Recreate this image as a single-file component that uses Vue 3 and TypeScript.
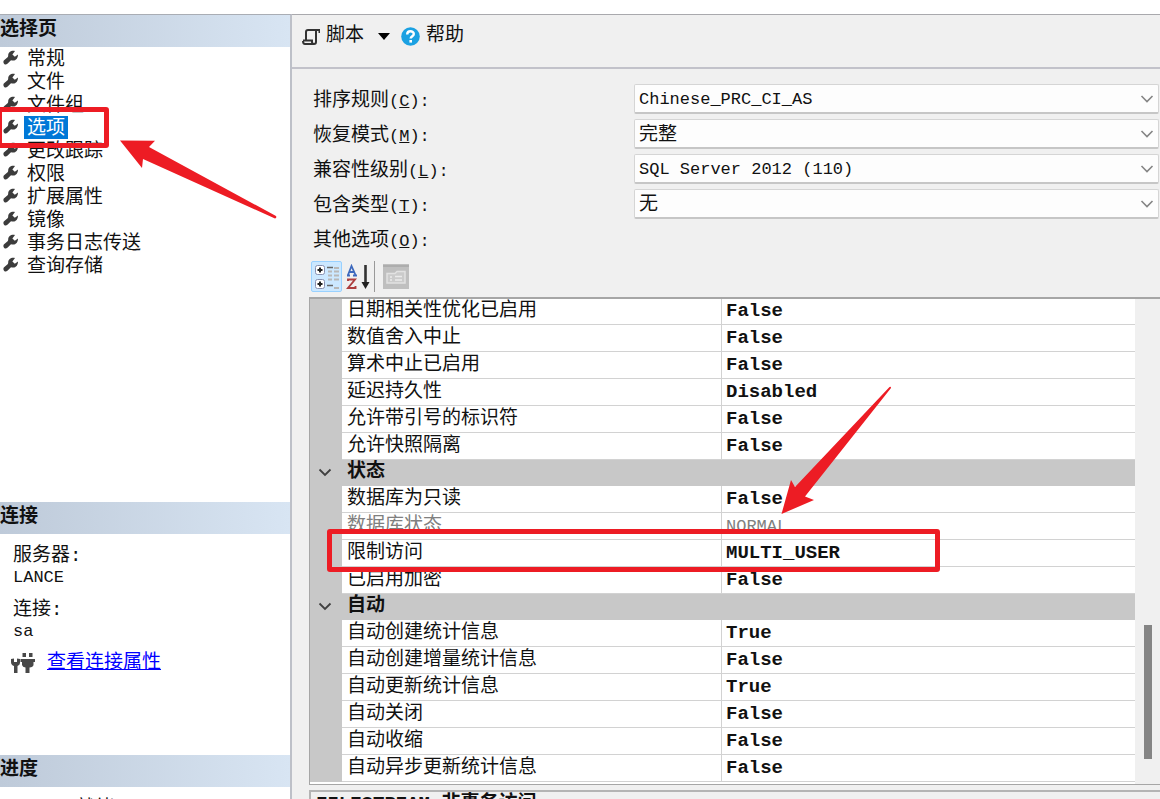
<script setup lang="ts">
import { ref } from 'vue'

interface Row { name: string; value?: string; kind?: 'group' | 'dim' }
interface Field { id: string; label: string; key: string; value: string; latin?: boolean }

const pages = ['常规', '文件', '文件组', '选项', '更改跟踪', '权限', '扩展属性', '镜像', '事务日志传送', '查询存储']
const current = ref('选项')

const fields = ref<Field[]>([
  { id: 'collation', label: '排序规则', key: 'C', value: 'Chinese_PRC_CI_AS', latin: true },
  { id: 'recovery', label: '恢复模式', key: 'M', value: '完整' },
  { id: 'compat', label: '兼容性级别', key: 'L', value: 'SQL Server 2012 (110)', latin: true },
  { id: 'containment', label: '包含类型', key: 'T', value: '无' },
])

const rows: Row[] = [
  { name: '日期相关性优化已启用', value: 'False' },
  { name: '数值舍入中止', value: 'False' },
  { name: '算术中止已启用', value: 'False' },
  { name: '延迟持久性', value: 'Disabled' },
  { name: '允许带引号的标识符', value: 'False' },
  { name: '允许快照隔离', value: 'False' },
  { name: '状态', kind: 'group' },
  { name: '数据库为只读', value: 'False' },
  { name: '数据库状态', value: 'NORMAL', kind: 'dim' },
  { name: '限制访问', value: 'MULTI_USER' },
  { name: '已启用加密', value: 'False' },
  { name: '自动', kind: 'group' },
  { name: '自动创建统计信息', value: 'True' },
  { name: '自动创建增量统计信息', value: 'False' },
  { name: '自动更新统计信息', value: 'True' },
  { name: '自动关闭', value: 'False' },
  { name: '自动收缩', value: 'False' },
  { name: '自动异步更新统计信息', value: 'False' },
]
</script>

<template>
  <div class="window">
    <aside class="side">
      <h2 class="band">选择页</h2>
      <nav class="pages">
        <button v-for="p in pages" :key="p" type="button" class="page" @click="current = p">
          <svg class="wrench" width="16" height="16" viewBox="0 0 16 16" aria-hidden="true">
            <path d="M12 1 C8.500 .2 5.200 1.800 5.200 5.600 Q5.200 6.700 4.600 7.200 L.8 10.600 Q-.2 12.500 1.200 14 Q2.800 15.200 4.400 13.800 L8 10.200 C12 11.600 15 9 15 4.500 L11.800 6.800 L9.400 4.600 Z" fill="#3c3c3c" />
          </svg>
          <span class="page-name" :class="{ active: p === current }">{{ p }}</span>
        </button>
      </nav>
      <h2 class="band">连接</h2>
      <section class="connection">
        <div>服务器:</div>
        <div class="latin">LANCE</div>
        <div class="second">连接:</div>
        <div class="latin">sa</div>
        <div class="view">
          <svg width="24" height="21" viewBox="0 0 24 21" aria-hidden="true">
            <path d="M0 6 L3 5.500 V9 H6 V5.500 L9 6 V10 Q9 12 6.500 13 V20 H3 V13 Q0 12 0 9 Z" fill="#484848" />
            <path d="M11.500 0 H15 V4 H11.500 Z M18 0 H21.500 V4 H18 Z M9.500 6 H24 V9 H22.500 V12 Q22 14 18.500 14.500 V20 H14.500 V14.500 Q11.500 14 11 12 V9 H9.500 Z" fill="#484848" />
          </svg>
          <a href="#">查看连接属性</a>
        </div>
      </section>
      <h2 class="band">进度</h2>
      <div class="status">就绪</div>
    </aside>

    <main class="content">
      <header class="toolbar">
        <button type="button" class="tool">
          <svg width="18" height="18" viewBox="0 0 18 18" fill="none" stroke="#333" stroke-width="2" aria-hidden="true">
            <path d="M17.500 5 V2 H6 Q4 2 4 4 V12 M1 12.500 H10 V14 Q10 16 12 16 M14 2 V14 Q14 16 12 16 H3 Q1 16 1 13" />
          </svg>
          <span class="tool-name">脚本</span>
          <svg class="caret" width="12" height="7" viewBox="0 0 12 7" aria-hidden="true"><path d="M0 0 H12 L6 7 Z" fill="#000" /></svg>
        </button>
        <button type="button" class="tool help">
          <svg width="19" height="19" viewBox="0 0 19 19" aria-hidden="true">
            <circle cx="9.500" cy="9.500" r="9.300" fill="#1ba1e2" />
            <path d="M6.200 7.400 C6.200 3.300 12.800 3.400 12.800 7 C12.800 9.200 9.700 9.300 9.700 11.600" fill="none" stroke="#fff" stroke-width="2.400" />
            <rect x="8.400" y="13" width="2.600" height="2.600" fill="#fff" />
          </svg>
          <span class="tool-name">帮助</span>
        </button>
      </header>

      <form class="fields" @submit.prevent>
        <template v-for="f in fields" :key="f.id">
          <label :for="f.id">{{ f.label }}<span class="latin">(<u>{{ f.key }}</u>):</span></label>
          <div class="combo">
            <select :id="f.id" v-model="f.value" :class="{ latin: f.latin }"><option>{{ f.value }}</option></select>
            <svg width="14" height="8" viewBox="0 0 14 8" aria-hidden="true"><path d="M1.500 1 L7 6.500 L12.500 1" fill="none" stroke="#858585" stroke-width="1.600" /></svg>
          </div>
        </template>
        <div id="others">其他选项<span class="latin">(<u>O</u>):</span></div>
      </form>

      <div class="grid-tools">
        <button type="button" class="sq on" aria-label="按分类顺序">
          <svg width="26" height="26" viewBox="0 0 26 26" aria-hidden="true">
            <g fill="#fff" stroke="#8890b0"><rect x="1.500" y="1.500" width="9" height="9" rx="2" /><rect x="1.500" y="15.500" width="9" height="9" rx="2" /></g>
            <path d="M3.500 6 H8.500 M6 3.500 V8.500 M3.500 20 H8.500 M6 17.500 V22.500" stroke="#222" stroke-width="2" />
            <path d="M13 3.500 H19 M13 21.500 H19" stroke="#666" stroke-width="1.500" />
            <path d="M14 7.500 H18 M20 7.500 H25 M14 11.500 H18 M20 11.500 H25 M14 15.500 H18 M20 15.500 H25 M20 4 H25 M20 24 H25" stroke="#b8b8b8" stroke-width="2" />
          </svg>
        </button>
        <button type="button" class="sq az" aria-label="按字母顺序">
          <svg width="24" height="26" viewBox="0 0 24 26" fill="none" aria-hidden="true">
            <path d="M1 11.500 H4 M7 11.500 H11 M2 11 L5.500 2 L9.500 11 M3.500 8 H8" stroke="#3d69bd" stroke-width="1.800" />
            <path d="M2 17 V15.500 H9 L2 24 H9.500 V22" stroke="#ad3e3e" stroke-width="1.900" />
            <path d="M19.500 1 V22" stroke="#333" stroke-width="2.600" />
            <path d="M15.500 18 H23.500 L19.500 25 Z" fill="#222" />
          </svg>
        </button>
        <span class="sep"></span>
        <button type="button" class="sq" disabled aria-label="属性页">
          <svg width="26" height="25" viewBox="0 0 26 25" fill="none" aria-hidden="true">
            <rect width="26" height="25" fill="#bfbfbf" /><path d="M0 2 H26" stroke="#adadad" stroke-width="2" />
            <path d="M4 19 V9.500 H12 L14 7.500 H22 V19 Z" fill="#cbcbcb" stroke="#e2e2e2" stroke-width="1.500" />
            <path d="M7 13 H9 M7 16 H9 M12 12.500 H19 M12 16 H19" stroke="#ebebeb" stroke-width="1.500" />
          </svg>
        </button>
      </div>

      <div class="property-grid">
        <table aria-labelledby="others">
          <colgroup><col class="c-gutter" /><col class="c-name" /><col /></colgroup>
          <tbody>
            <tr v-for="r in rows" :key="r.name" :class="r.kind">
              <td class="gutter">
                <svg v-if="r.kind === 'group'" width="14" height="9" viewBox="0 0 14 9" aria-hidden="true"><path d="M1.500 1.500 L7 7 L12.500 1.500" fill="none" stroke="#404040" stroke-width="1.800" /></svg>
              </td>
              <th scope="row" :colspan="r.kind === 'group' ? 2 : 1">{{ r.name }}</th>
              <td v-if="r.kind !== 'group'" class="value">{{ r.value }}</td>
            </tr>
          </tbody>
        </table>
        <div class="scroll"><div class="thumb"></div></div>
      </div>

      <div class="description">FILESTREAM 非事务访问</div>
    </main>

    <div class="mark mark-page"></div>
    <div class="mark mark-row"></div>
    <svg class="arrow arrow-page" width="158" height="80" viewBox="0 0 158 80" aria-hidden="true">
      <path d="M0 .5 L35 .7 L29 7 L156 76 Q157 78 155 78.500 L23 19 L22 28 Z" fill="#ed1c24" />
    </svg>
    <svg class="arrow arrow-row" width="112" height="130" viewBox="0 0 112 130" aria-hidden="true">
      <path d="M1.500 129 L34 115 L25 111.500 L111 3 Q111 1 109.500 2 L15 102 L11 95 Z" fill="#ed1c24" />
    </svg>
  </div>
</template>

<style>
body { margin: 0; background: #fff; }
</style>

<style scoped>
.window {
  position: relative;
  box-sizing: border-box;
  display: flex;
  height: 100vh;
  padding-top: 14px;
  overflow: hidden;
  color: #111;
  font: 19px/23px "Liberation Mono", "Noto Sans CJK SC", monospace;
}
* { box-sizing: border-box; }
button, select { font: inherit; color: inherit; padding: 0; border: 0; background: none; }
.latin { font-size: 17px; }
.side { display: flex; flex-direction: column; flex: 0 0 292px; border-top: 1px solid #a9adb4; border-right: 2px solid #bdc0c8; }
.band { flex: none; height: 32px; margin: 0; font-size: 19px; line-height: 31px; font-weight: 700; background: linear-gradient(90deg, #becad9, #d8e5f3); }
.pages { display: flex; flex-direction: column; flex: none; height: 455px; }
.page { display: flex; align-items: flex-start; height: 23px; padding-left: 3px; text-align: left; }
.wrench { flex: none; margin: 3px 5px 0 0; }
.page-name { height: 23px; padding: 0 3px; line-height: 26px; }
.page-name.active { background: #0078d7; color: #fff; }
.connection { flex: none; height: 221px; padding: 11px 13px; line-height: 22px; }
.second { margin-top: 10px; }
.view { display: flex; align-items: center; gap: 12px; margin: 9px 0 0 -2px; }
.view a { color: #00f; }
.status { padding: 11px 0 0 76px; }

.content { flex: 1; min-width: 0; display: flex; flex-direction: column; border-top: 1px solid #a9a9ad; background: #f0f0f0; }
.toolbar { flex: none; display: flex; align-items: flex-start; height: 54px; padding: 8px 10px; border-bottom: 2px solid #c2c2ca; }
.tool { display: flex; align-items: center; gap: 6px; }
.tool-name { line-height: 27px; }
.caret { margin-left: 8px; }
.help { margin-left: 11px; }
.fields { flex: none; display: grid; grid-template-columns: 321px 1fr; grid-auto-rows: 30px; row-gap: 5px; align-items: center; padding: 15px 1px 0 21px; }
label, #others { padding-top: 4px; }
.combo { position: relative; height: 30px; }
.combo select { width: 100%; height: 30px; padding: 4px 24px 0 4px; appearance: none; background: #fdfdfd; border: 1px solid #d5d5d5; border-bottom: 2px solid #c6c6c6; border-radius: 2px; }
.combo select.latin { padding-top: 2px; }
.combo svg { position: absolute; right: 5px; top: 11px; pointer-events: none; }
.grid-tools { flex: none; display: flex; align-items: flex-start; height: 36px; margin: 7px 0 0 19px; }
.sq { display: flex; align-items: center; justify-content: center; width: 31px; height: 31px; }
.sq.on { background: #cce8ff; border: 1px solid #99d1ff; border-radius: 2px; }
.az { width: 32px; }
.sep { width: 1px; height: 31px; margin-right: 5px; background: #999; }

.property-grid { flex: none; display: flex; margin-left: 17px; padding-bottom: 2px; border: 1px solid #a6a6a6; border-top-width: 2px; border-right: 0; background: #fff; }
table { flex: 1; table-layout: fixed; border-collapse: separate; border-spacing: 0; }
.c-gutter { width: 32px; }
.c-name { width: 380px; }
td, th { height: 27px; padding: 0 0 0 5px; line-height: 25px; text-align: left; font-weight: 400; white-space: nowrap; border-bottom: 1px solid #d2d2d2; }
th { border-right: 1px solid #d2d2d2; }
.gutter { padding: 0 2px 0 0; background: #c8c8c8; border-bottom-color: #c8c8c8; text-align: center; line-height: 0; }
.gutter svg { vertical-align: middle; }
.value { padding-left: 4px; font-weight: 700; }
tr:first-child td, tr:first-child th, .group td, .group th { height: 26px; }
.group td, .group th { background: #c8c8c8; border-color: #c8c8c8; }
.group th { font-weight: 700; }
.dim th, .dim .value { color: #808080; font-weight: 400; }
.dim .value { font-size: 17px; }
.scroll { flex: 0 0 25px; margin-bottom: -2px; padding: 326px 0 0 9px; background: #f0f0f0; }
.thumb { width: 8px; height: 134px; background: #858585; }
.description { flex: none; height: 60px; margin: 5px 0 0 17px; padding: 1px 5px; border: 2px solid #b4b4b4; border-right: 0; font-weight: 700; }

.mark { position: absolute; border: 5px solid #ed1c24; border-radius: 3px; }
.mark-page { left: -3px; top: 107px; width: 112px; height: 41px; }
.mark-row { left: 327px; top: 529px; width: 613px; height: 43px; }
.arrow { position: absolute; }
.arrow-page { left: 120px; top: 140px; }
.arrow-row { left: 780px; top: 385px; }
</style>
